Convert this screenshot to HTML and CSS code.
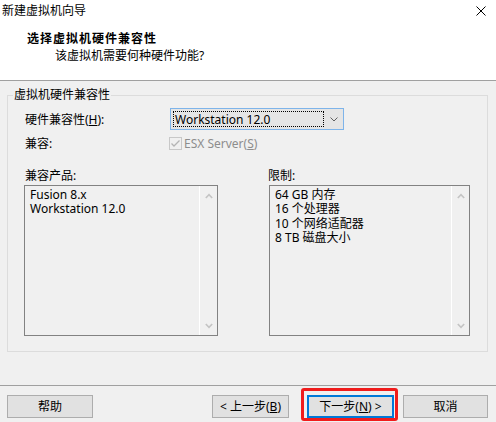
FILE: index.html
```html
<!DOCTYPE html>
<html lang="zh-CN">
<head>
<meta charset="utf-8">
<title>新建虚拟机向导</title>
<link rel="stylesheet" href="styles.css">
</head>
<body>
<div class="window">
  <header class="header">
    <div class="titlebar">
      <span class="title">新建虚拟机向导</span>
      <svg class="close" width="10" height="10" viewBox="0 0 10 10"><path d="M0.5 0.5L9.5 9.5M9.5 0.5L0.5 9.5" stroke="#000" stroke-width="1"/></svg>
    </div>
    <div class="heading">选择虚拟机硬件兼容性</div>
    <div class="subheading">该虚拟机需要何种硬件功能?</div>
  </header>
  <main class="content">
    <fieldset class="group">
      <legend class="legend">虚拟机硬件兼容性</legend>
      <div class="group-body">
        <div class="row row-hw">
          <span class="label">硬件兼容性(<u>H</u>):</span>
          <div class="combo">
            <span class="combo-text">Workstation 12.0</span>
            <span class="combo-arrow"><svg width="8" height="5" viewBox="0 0 8 5"><path d="M0.5 0.5L4 4L7.5 0.5" fill="none" stroke="#606060" stroke-width="1"/></svg></span>
          </div>
        </div>
        <div class="row row-compat">
          <span class="label">兼容:</span>
          <span class="check">
            <svg class="checkbox" width="13" height="13" viewBox="0 0 13 13"><rect x="0.5" y="0.5" width="12" height="12" fill="#f0f0f0" stroke="#c8c8c8"/><path d="M2.5 6.5L5 9L10.5 3.5" fill="none" stroke="#b4b4b4" stroke-width="1.3"/></svg>
            <span class="check-text">ESX Server(<u>S</u>)</span>
          </span>
        </div>
        <div class="lists">
          <div class="listcol col-products">
            <div class="listlabel">兼容产品:</div>
            <div class="listbox">
              <div class="listitems">
                <div>Fusion 8.x</div>
                <div>Workstation 12.0</div>
              </div>
              <div class="scroll">
                <svg width="8" height="6" viewBox="0 0 8 6"><path d="M0.8 5L4 1.6L7.2 5" fill="none" stroke="#c4c4c4" stroke-width="1.6"/></svg>
                <svg width="8" height="6" viewBox="0 0 8 6"><path d="M0.8 1L4 4.4L7.2 1" fill="none" stroke="#c4c4c4" stroke-width="1.6"/></svg>
              </div>
            </div>
          </div>
          <div class="listcol col-limits">
            <div class="listlabel">限制:</div>
            <div class="listbox">
              <div class="listitems">
                <div>64 GB 内存</div>
                <div>16 个处理器</div>
                <div>10 个网络适配器</div>
                <div>8 TB 磁盘大小</div>
              </div>
              <div class="scroll">
                <svg width="8" height="6" viewBox="0 0 8 6"><path d="M0.8 5L4 1.6L7.2 5" fill="none" stroke="#c4c4c4" stroke-width="1.6"/></svg>
                <svg width="8" height="6" viewBox="0 0 8 6"><path d="M0.8 1L4 4.4L7.2 1" fill="none" stroke="#c4c4c4" stroke-width="1.6"/></svg>
              </div>
            </div>
          </div>
        </div>
      </div>
    </fieldset>
  </main>
  <footer class="footer">
    <button class="btn btn-help">帮助</button>
    <div class="nav">
      <button class="btn btn-back">&lt; 上一步(<u>B</u>)</button>
      <span class="highlight"><button class="btn btn-next">下一步(<u>N</u>) &gt;</button></span>
      <button class="btn btn-cancel">取消</button>
    </div>
  </footer>
</div>
</body>
</html>
```
FILE: styles.css
```css
* { box-sizing: border-box; }
html, body { margin: 0; padding: 0; }
body {
  width: 496px;
  height: 422px;
  overflow: hidden;
  background: #f0f0f0;
  font-family: "Noto Sans", "Noto Sans CJK SC", sans-serif;
  font-size: 12px;
  color: #000;
}
.window { width: 496px; height: 422px; display: flex; flex-direction: column; }

.header { height: 81px; background: #fff; border-bottom: 1px solid #a0a0a0; flex: none; }
.titlebar {
  height: 22px;
  display: flex;
  justify-content: space-between;
  align-items: center;
  padding: 0 10px 0 2px;
  line-height: 22px;
}
.close { display: block; }
.heading { margin-top: 9px; padding-left: 27px; font-weight: bold; letter-spacing: 1px; line-height: 16px; }
.subheading { margin-top: 1px; padding-left: 55px; line-height: 16px; }

.content { height: 304px; padding-top: 6px; flex: none; }
.group {
  margin: 0 0 0 7px;
  width: 481px;
  min-width: 0;
  padding: 0;
  border: 1px solid #dcdcdc;
}
.legend { margin-left: 5px; padding: 0 1px; line-height: 16px; }
.group-body { padding: 0 0 15px 16px; }

.row { display: flex; align-items: center; }
.label { padding-left: 1px; }
.row-hw { margin-top: 5px; height: 22px; }
.row-hw .label { width: 146px; }
.combo {
  width: 174px;
  height: 22px;
  border: 1px solid #7eb4ea;
  background: #e5e5e5;
  display: flex;
  align-items: stretch;
}
.combo-text {
  flex: 1;
  margin: 2px 0 2px 2px;
  border: 1px dotted #000;
  line-height: 16px;
  padding-left: 1px;
}
.combo-arrow { width: 19px; display: flex; align-items: center; justify-content: center; }
.combo-arrow svg { display: block; margin-left: 1px; }

.row-compat { margin-top: 7px; height: 13px; line-height: 13px; }
.row-compat .label { width: 145px; }
.check { display: flex; align-items: center; gap: 2px; }
.checkbox { display: block; }
.check-text { color: #8d8d8d; }

.lists { display: flex; gap: 51px; margin-top: 19px; }
.listlabel { line-height: 14px; margin-bottom: 2px; padding-left: 1px; }
.col-limits .listlabel { padding-left: 0; margin-left: -1px; }
.col-products { width: 194px; }
.col-limits { width: 201px; }
.listbox {
  height: 151px;
  border: 1px solid #828282;
  background: #f0f0f0;
  display: flex;
}
.listitems { flex: 1; padding: 2px 0 0 5px; line-height: 14.3px; }
.scroll {
  width: 18px;
  border-left: 1px solid #fff;
  display: flex;
  flex-direction: column;
  justify-content: space-between;
  align-items: center;
  padding: 7px 0 6px;
}
.scroll svg { display: block; }

.footer {
  flex: 1;
  border-top: 1px solid #a0a0a0;
  display: flex;
  align-items: flex-start;
  justify-content: space-between;
  padding: 9px 8px 0 7px;
}
.nav { display: flex; align-items: flex-start; }
.btn {
  height: 23px;
  margin: 0;
  padding: 0;
  font: inherit;
  color: #000;
  background: #e1e1e1;
  border: 1px solid #adadad;
  line-height: 20px;
  text-align: center;
}
.btn-help { width: 86px; }
.btn-back { width: 77px; margin-right: 18px; }
.highlight { position: relative; display: block; margin-right: 9px; }
.highlight::after {
  content: "";
  position: absolute;
  left: -6px;
  right: -4px;
  top: -7px;
  bottom: -3px;
  border: 3px solid #f01c1c;
  border-radius: 3px;
}
.btn-next { width: 87px; border: 2px solid #0078d7; display: block; }
.btn-cancel { width: 85px; }
```
